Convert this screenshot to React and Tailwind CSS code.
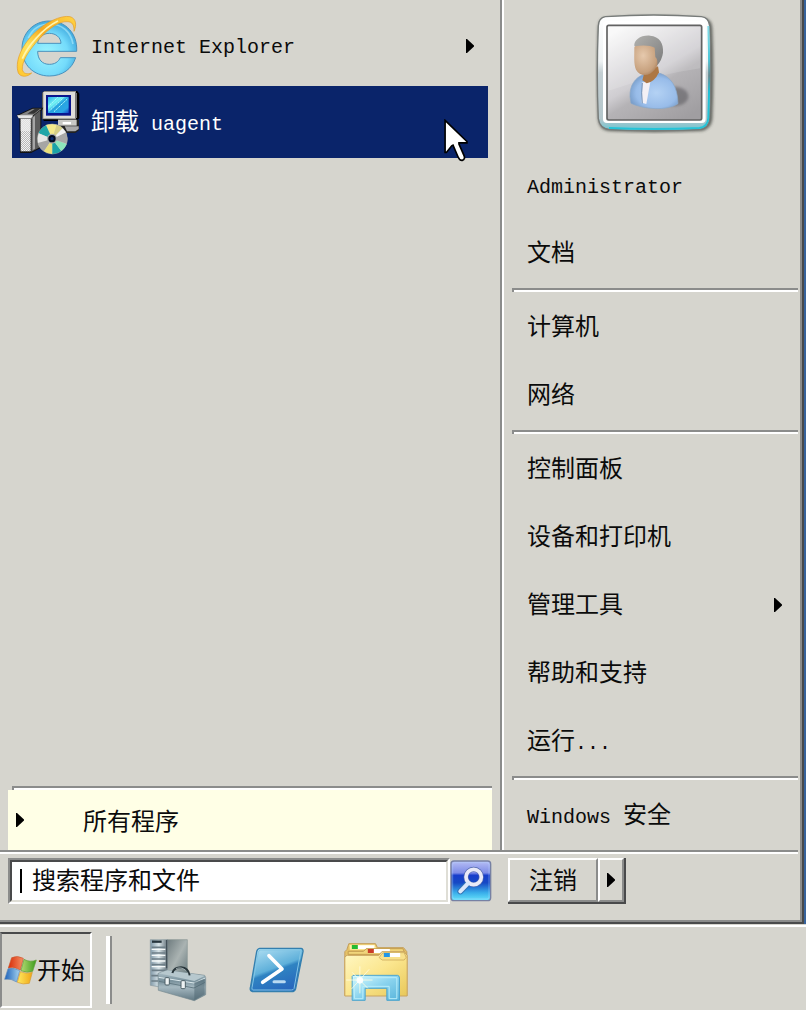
import React from "react";

const FONT = "font-['Liberation_Mono','Noto_Sans_CJK_SC',monospace]";

function Latin({ children }) {
  return <span className="whitespace-pre text-xl leading-none">{children}</span>;
}

function Arrow() {
  return (
    <svg viewBox="0 0 8 14" className="h-3.5 w-2 shrink-0" aria-hidden="true">
      <path d="M0 0H1L8 6.5V7.5L1 14H0Z" fill="#000" />
    </svg>
  );
}

function Divider() {
  return <div className="my-px ml-2 h-1 border-t-2 border-l-2 border-[#8b8c8b] bg-white" role="separator" />;
}

function IeIcon() {
  return (
    <svg viewBox="51 37 189 189" className="size-[63px]" aria-hidden="true">
      <defs>
        <radialGradient id="ieBlue" cx="0.45" cy="0.6" r="0.6">
          <stop offset="0" stopColor="#9df5ff" />
          <stop offset="0.65" stopColor="#74dbfb" />
          <stop offset="1" stopColor="#3fa9de" />
        </radialGradient>
        <linearGradient id="ieGold" x1="0" y1="1" x2="1" y2="0">
          <stop offset="0" stopColor="#ffc52c" />
          <stop offset="0.35" stopColor="#ffe45c" />
          <stop offset="0.6" stopColor="#f7a91d" />
          <stop offset="1" stopColor="#ffd545" />
        </linearGradient>
      </defs>
      <path
        fillRule="evenodd"
        d="M233 146C236 92 200 55 151 55C105 55 69 90 69 138C69 187 105 220 151 220C190 220 219 199 230 165H184C178 178 167 185 151 185C130 185 116 171 116 146ZM116 122C118 104 132 92 151 92C171 92 185 104 186 122Z"
        fill="url(#ieBlue)"
        stroke="#4a92bd"
        strokeWidth="3"
      />
      <path d="M88 106C102 74 127 64 151 64C190 64 216 88 222 124" fill="none" stroke="#b9f2ff" strokeWidth="5" opacity="0.55" />
      <path
        d="M98 211C86 223 66 225 58 211C47 179 65 134 102 95C139 58 186 37 213 42C231 47 234 66 225 86C226 66 219 57 205 57C182 55 152 75 121 109C86 146 68 179 70 201C73 213 84 216 98 211Z"
        fill="url(#ieGold)"
        stroke="#e59b22"
        strokeWidth="2"
      />
      <path d="M70 168C86 130 131 77 177 55" fill="none" stroke="#fff5ad" strokeWidth="5" />
    </svg>
  );
}

function InstallerIcon() {
  return (
    <svg viewBox="48 267 192 195" className="h-[65px] w-16" aria-hidden="true">
      <defs>
        <pattern id="dither" width="6" height="6" patternUnits="userSpaceOnUse">
          <rect width="6" height="6" fill="#f2f2f2" />
          <path d="M0 0H3V3H0ZM3 3H6V6H3Z" fill="#b8b8b8" />
        </pattern>
        <linearGradient id="crt" x1="0" y1="0" x2="1" y2="1">
          <stop offset="0" stopColor="#2aaeea" />
          <stop offset="0.35" stopColor="#76f4f4" />
          <stop offset="0.5" stopColor="#26a4e0" />
          <stop offset="0.8" stopColor="#2ba6e6" />
          <stop offset="1" stopColor="#1548c8" />
        </linearGradient>
      </defs>
      <path d="M126 276L134 270H232L238 278V352L228 360H132L126 352Z" fill="#000" />
      <path d="M127 275L133 270H228V355H127Z" fill="#8a8a86" />
      <path d="M130 273H225V352H130Z" fill="#deded8" />
      <path d="M225 276H231V351H225Z" fill="#777" />
      <path d="M138 282H213V344H138Z" fill="#0a168f" />
      <path d="M144 288H206V336H144Z" fill="url(#crt)" />
      <path d="M145 316L173 289M148 330L190 290M162 332L203 293" stroke="#b8ffff" strokeWidth="3" strokeDasharray="5 2" />
      <path d="M174 357H237V388L226 396H183Z" fill="#222" />
      <path d="M174 356H230V374H174Z" fill="#c9c9c5" />
      <path d="M188 363H213V370H188Z" fill="#fff" />
      <path d="M194 376H236V384L226 391H201Z" fill="#aaa" />
      <path d="M50 343L98 320H130L124 331V440L93 456H60L58 355Z" fill="#111" />
      <path d="M53 344L98 323H125L96 346V353H62Z" fill="#858585" />
      <path d="M82 338L104 324H120L102 338Z" fill="#333" />
      <path d="M51 343H98V352H56Z" fill="#e5e5e5" />
      <path d="M62 354H92V451H62Z" fill="url(#dither)" />
      <path d="M62 354H92V390H62Z" fill="#ececec" opacity="0.75" />
      <path d="M94 350L121 328V438L94 452Z" fill="#5c5c5c" />
      <path d="M98 350L105 344V443L98 447Z" fill="#a5a5a5" />
      <circle cx="157" cy="414" r="45" fill="#d2d2ce" stroke="#89908b" strokeWidth="2" />
      <path d="M157 414L138 372Q151 368 170 371Z" fill="#f4ea8b" />
      <path d="M157 414L170 371Q181 374 188 382Z" fill="#d6cf86" />
      <path d="M157 414L138 373Q121 382 116 397Z" fill="#20a6a8" />
      <path d="M157 414L116 397Q111 411 114 426Z" fill="#e6e6e4" />
      <path d="M157 414L114 426Q118 442 132 451Z" fill="#a6a6a4" />
      <path d="M157 414L132 451Q144 459 157 459Z" fill="#e9df7b" />
      <path d="M157 414L157 459Q172 459 184 450Z" fill="#1aa3a8" />
      <path d="M157 414L184 450Q195 442 200 429Z" fill="#8ee6bc" />
      <path d="M157 414L198 394Q204 409 201 428Z" fill="#a9a9a7" />
      <path d="M157 414L188 382L198 394Z" fill="#f2f2f2" />
      <circle cx="156" cy="413" r="15" fill="#a5aaa9" />
      <circle cx="156" cy="413" r="11" fill="#020b22" />
      <circle cx="156" cy="413" r="5" fill="#0b2d71" />
    </svg>
  );
}

function Avatar() {
  return (
    <svg viewBox="45 37 363 363" className="size-[121px]" role="img" aria-label="Administrator">
      <defs>
        <linearGradient id="photo" x1="0.2" y1="0" x2="0.8" y2="1">
          <stop offset="0" stopColor="#f8f8f8" />
          <stop offset="0.5" stopColor="#cfcdd1" />
          <stop offset="0.62" stopColor="#b5b3b6" />
          <stop offset="1" stopColor="#a09ea1" />
        </linearGradient>
        <linearGradient id="rim" x1="0" y1="0" x2="0" y2="1">
          <stop offset="0" stopColor="#fff" />
          <stop offset="0.4" stopColor="#eef2f3" />
          <stop offset="0.5" stopColor="#c3ced2" />
          <stop offset="0.9" stopColor="#b4c6cb" />
          <stop offset="1" stopColor="#6cc6d2" />
        </linearGradient>
        <linearGradient id="edge" gradientUnits="userSpaceOnUse" x1="0" y1="60" x2="0" y2="388">
          <stop offset="0" stopColor="#8ee0ea" />
          <stop offset="0.35" stopColor="#4dc6d8" />
          <stop offset="0.5" stopColor="#64888f" />
          <stop offset="0.65" stopColor="#1fc0d6" />
          <stop offset="1" stopColor="#25c4d8" />
        </linearGradient>
        <radialGradient id="face" cx="0.35" cy="0.4" r="0.8">
          <stop offset="0" stopColor="#e6c9ad" />
          <stop offset="0.65" stopColor="#c6a07d" />
          <stop offset="1" stopColor="#906039" />
        </radialGradient>
        <linearGradient id="hair" x1="0" y1="0" x2="1" y2="1">
          <stop offset="0" stopColor="#b1b1ae" />
          <stop offset="1" stopColor="#7c7c7c" />
        </linearGradient>
        <radialGradient id="shirt" cx="0.55" cy="0.55" r="0.65">
          <stop offset="0" stopColor="#b4d2f4" />
          <stop offset="0.65" stopColor="#98bce9" />
          <stop offset="1" stopColor="#6c91bd" />
        </radialGradient>
        <filter id="soft" x="-20%" y="-20%" width="140%" height="140%">
          <feGaussianBlur stdDeviation="5" />
        </filter>
      </defs>
      <path d="M72 52Q222 40 374 52Q396 57 397 85Q403 219 397 356Q393 386 364 391Q222 398 87 391Q57 388 54 355Q48 219 54 84Q55 56 72 52Z" fill="#3b3d39" opacity="0.75" filter="url(#soft)" />
      <path d="M76 48Q222 38 364 48Q386 50 389 76Q395 219 389 354Q387 382 360 386Q222 393 87 386Q59 383 55 354Q49 219 55 76Q56 51 76 48Z" fill="url(#rim)" stroke="#777b79" strokeWidth="4" />
      <path d="M385 76Q390 219 385 352Q383 379 358 382Q222 388 87 382" fill="none" stroke="url(#edge)" strokeWidth="6" />
      <rect x="69" y="61" width="308" height="306" rx="12" fill="#fff" />
      <rect x="81" y="74" width="284" height="284" rx="5" fill="url(#photo)" stroke="#626262" strokeWidth="5" />
      <path d="M86 79H360V203Q220 224 86 270Z" fill="#fff" opacity="0.14" />
      <ellipse cx="285" cy="287" rx="40" ry="29" fill="#56545a" opacity="0.55" filter="url(#soft)" />
      <path d="M150 288C149 254 165 231 190 222L240 218C271 228 293 256 294 309C262 332 190 326 153 308Z" fill="url(#shirt)" stroke="#8aa7c8" strokeWidth="2" />
      <path d="M187 245L211 244L199 310L185 306Z" fill="#f3f0f5" />
      <path d="M192 220L234 197L237 215Q224 244 200 248L187 239Z" fill="#ad7744" />
      <path d="M163 140C175 122 225 119 238 148C244 174 232 207 210 219C194 228 176 221 168 207C161 190 163 168 163 140Z" fill="url(#face)" />
      <path d="M163 137C161 118 182 103 210 105C239 108 251 127 249 156Q246 179 231 194Q235 177 226 169L224 141Q204 131 163 137Z" fill="url(#hair)" />
      <path d="M187 247Q183 275 187 308" stroke="#7592b6" strokeWidth="3" fill="none" />
    </svg>
  );
}

function Cursor() {
  return (
    <svg viewBox="72 298 72 130" className="absolute top-[33px] right-5 h-[43px] w-6" aria-hidden="true">
      <path d="M75 302V399H79L95 379L99 377L114 412Q119 424 127 423Q137 420 132 408L117 374V370H141V366Z" fill="#fff" stroke="#000" strokeWidth="5" />
    </svg>
  );
}

function FlagIcon() {
  return (
    <svg viewBox="9 554 99 90" className="h-[30px] w-[33px] shrink-0" aria-hidden="true">
      <defs>
        <linearGradient id="fr"><stop stopColor="#d92d0a" /><stop offset="1" stopColor="#f59065" /></linearGradient>
        <linearGradient id="fg"><stop stopColor="#b4da72" /><stop offset="1" stopColor="#3b9b1b" /></linearGradient>
        <linearGradient id="fb"><stop stopColor="#1d61b9" /><stop offset="1" stopColor="#a5d3ef" /></linearGradient>
        <linearGradient id="fy"><stop stopColor="#ffea60" /><stop offset="1" stopColor="#efa516" /></linearGradient>
      </defs>
      <path d="M32 562Q50 554 67 564L58 599Q42 588 22 593Z" fill="url(#fr)" stroke="#c9562f" strokeWidth="2" />
      <path d="M69 567Q87 577 106 569L95 603Q78 609 60 601Z" fill="url(#fg)" stroke="#639b3b" strokeWidth="2" />
      <path d="M21 595Q41 591 56 601L47 635Q32 624 11 627Z" fill="url(#fb)" stroke="#6289b6" strokeWidth="2" />
      <path d="M58 604Q76 612 94 606L85 639Q66 644 49 636Z" fill="url(#fy)" stroke="#d49a32" strokeWidth="2" />
    </svg>
  );
}

function ServerIcon() {
  return (
    <svg viewBox="58 52 174 192" className="h-16 w-[58px]" aria-hidden="true">
      <defs>
        <linearGradient id="srvSide" x1="0" y1="0" x2="1" y2="1"><stop stopColor="#6e7b7e" /><stop offset="0.5" stopColor="#aab3b2" /><stop offset="1" stopColor="#65777b" /></linearGradient>
        <linearGradient id="srvFront"><stop stopColor="#8199a8" /><stop offset="0.5" stopColor="#d8e4e8" /><stop offset="1" stopColor="#66747c" /></linearGradient>
        <linearGradient id="box" x1="0" y1="0" x2="0" y2="1"><stop stopColor="#b9cbd2" /><stop offset="0.35" stopColor="#78909b" /><stop offset="0.55" stopColor="#a6b9c1" /><stop offset="1" stopColor="#617883" /></linearGradient>
      </defs>
      <path d="M112 57H173V172H112Z" fill="url(#srvSide)" stroke="#8b9795" strokeWidth="2" />
      <path d="M62 57H113V183L85 198L62 194Z" fill="url(#srvFront)" stroke="#89999f" strokeWidth="2" />
      <path d="M67 63H96" stroke="#26353d" strokeWidth="7" />
      <path d="M66 80H108M66 97H108M66 115H108M66 132H108M66 149H108M65 165H88M65 181H86" stroke="#6d7e87" strokeWidth="5" />
      <path d="M66 86H107M66 104H107M66 121H107M66 138H107" stroke="#f5f9f9" strokeWidth="4" />
      <path d="M111 58V143" stroke="#435058" strokeWidth="4" />
      <path d="M85 158L112 149L225 164L228 171V222L194 240L86 209Z" fill="url(#box)" stroke="#768990" strokeWidth="2" />
      <path d="M87 158L114 149L226 165L194 181Z" fill="#b7c8ce" />
      <path d="M87 170L193 187L227 172" fill="none" stroke="#dce9ed" strokeWidth="3" />
      <path d="M88 182L193 202L226 185" fill="none" stroke="#657c86" strokeWidth="3" />
      <path d="M194 185V238L225 221V174Z" fill="#516872" opacity="0.55" />
      <path d="M128 157Q134 140 154 140Q176 142 180 164" fill="none" stroke="#29363b" strokeWidth="6" />
      <path d="M139 144Q154 137 168 149" fill="none" stroke="#c2ced1" strokeWidth="2" />
      <rect x="106" y="171" width="13" height="22" rx="3" fill="#eef3f4" stroke="#4c5e66" strokeWidth="3" />
      <rect x="154" y="180" width="13" height="24" rx="3" fill="#eef3f4" stroke="#4c5e66" strokeWidth="3" />
    </svg>
  );
}

function PowerShellIcon() {
  return (
    <svg viewBox="28 81 165 138" className="h-[46px] w-[55px]" aria-hidden="true">
      <defs>
        <linearGradient id="psBg" x1="0.2" y1="0" x2="0.65" y2="1"><stop stopColor="#aadcf1" /><stop offset="0.47" stopColor="#5fb0da" /><stop offset="0.54" stopColor="#2f83c2" /><stop offset="1" stopColor="#2766bd" /></linearGradient>
      </defs>
      <path d="M60 85H184Q191 86 190 95L168 206Q165 215 156 215H38Q30 213 32 204L51 95Q53 86 60 85Z" fill="url(#psBg)" stroke="#347fae" strokeWidth="4" />
      <path d="M61 90H184L163 206Q161 210 155 210H39Q36 209 37 203L56 96Z" fill="none" stroke="#83c6e4" strokeWidth="3" />
      <path d="M88 107L127 147L69 187" fill="none" stroke="#fff" strokeWidth="11" strokeLinecap="round" strokeLinejoin="round" />
      <path d="M103 185H134" stroke="#b9daf2" strokeWidth="9" strokeLinecap="round" />
    </svg>
  );
}

function ExplorerIcon() {
  return (
    <svg viewBox="310 69 197 180" className="h-[60px] w-[66px]" aria-hidden="true">
      <defs>
        <linearGradient id="folder" x1="0" y1="0" x2="1" y2="1"><stop stopColor="#fff8c5" /><stop offset="0.5" stopColor="#fbe68e" /><stop offset="1" stopColor="#e8c85a" /></linearGradient>
        <linearGradient id="glass" x1="0" y1="0" x2="1" y2="1"><stop stopColor="#d9fcff" /><stop offset="0.5" stopColor="#8ad3ee" /><stop offset="1" stopColor="#58b4db" /></linearGradient>
      </defs>
      <path d="M315 98L321 92L327 74H407L413 86H491L501 98V229H315Z" fill="#e6c266" stroke="#c49f5c" strokeWidth="3" />
      <path d="M329 77H405L410 92H330Z" fill="#fff0a5" />
      <path d="M351 79H403V90H351Z" fill="#fff" />
      <rect x="336" y="78" width="18" height="12" fill="#24bb31" />
      <path d="M325 97H371L379 89H489L497 106H325Z" fill="#f1d57b" stroke="#c49d50" strokeWidth="3" />
      <path d="M400 90H450V102H400Z" fill="#fff" />
      <rect x="384" y="90" width="18" height="12" fill="#ca3d28" />
      <path d="M315 116Q316 109 323 109H417L426 98H493L502 109V231H315Z" fill="url(#folder)" stroke="#c9a460" strokeWidth="3" />
      <path d="M418 116Q427 100 432 101H493L499 115L493 123H427Z" fill="#f8e18c" stroke="#c49e50" strokeWidth="2" />
      <path d="M449 102H481V114H449Z" fill="#fff" />
      <rect x="432" y="102" width="18" height="12" fill="#2196e8" />
      <path d="M337 172Q338 169 343 169H473Q479 170 479 177V244H441V208H376V244H337Z" fill="url(#glass)" stroke="#4da5cd" strokeWidth="3" />
      <path d="M343 176H471V239H448V202H369V239H344Z" fill="none" stroke="#b8edfa" strokeWidth="3" />
      <path d="M360 142V223M319 183H398M337 160L384 208M335 210L388 151" stroke="#fffde3" strokeWidth="3" opacity="0.8" />
      <circle cx="360" cy="184" r="10" fill="#fff" opacity="0.9" />
    </svg>
  );
}

function SearchIcon() {
  return (
    <svg viewBox="61 270 126 126" className="size-[42px]" aria-hidden="true">
      <defs>
        <linearGradient id="srch" x1="0" y1="0" x2="0" y2="1">
          <stop stopColor="#b7bff5" />
          <stop offset="0.3" stopColor="#7d8be7" />
          <stop offset="0.36" stopColor="#173dcb" />
          <stop offset="0.55" stopColor="#1649c4" />
          <stop offset="0.8" stopColor="#39aeea" />
          <stop offset="1" stopColor="#68e5fa" />
        </linearGradient>
      </defs>
      <rect x="64" y="273" width="119" height="119" rx="9" fill="url(#srch)" stroke="#7781a3" strokeWidth="4" />
      <rect x="69" y="278" width="109" height="109" rx="6" fill="none" stroke="#b7d6ff" strokeWidth="2" opacity="0.6" />
      <circle cx="132" cy="321" r="23" fill="none" stroke="#5268ad" strokeWidth="15" />
      <path d="M115 340L92 364" stroke="#3275b6" strokeWidth="18" strokeLinecap="round" />
      <circle cx="132" cy="321" r="23" fill="none" stroke="#e9eaf8" strokeWidth="11" />
      <path d="M115 340L92 364" stroke="#dce9fa" strokeWidth="12" strokeLinecap="round" />
    </svg>
  );
}

function SideItem({ children, submenu }) {
  return (
    <a href="#" className="flex h-[68px] items-center justify-between pr-4 pl-[23px] text-2xl leading-none">
      <span className="pt-1">{children}</span>
      {submenu && <Arrow />}
    </a>
  );
}

export default function App() {
  return (
    <main className={`bg-[#d6d5ce] text-[#0b0b0b] ${FONT}`}>
      <div className="border-r-2 border-[#37639c]">
        <section className="border-r-2 border-b-2 border-[#494a4b]">
          <div className="border-r-2 border-b-2 border-[#8b8c8b]">
            <div className="mr-0.5 flex border-b-2 border-[#8b8c8b]">
              <nav className="flex min-w-0 flex-1 flex-col border-r-2 border-[#8b8c8b] pt-2.5 pr-2 pl-2" aria-label="程序">
                <a href="#" className="mr-1 ml-1 flex h-[72px] items-center pr-3.5 pl-1 text-2xl leading-none">
                  <span className="flex w-[75px] shrink-0"><IeIcon /></span>
                  <span className="flex-1 pt-0.5"><Latin>Internet Explorer</Latin></span>
                  <Arrow />
                </a>
                <a href="#" className="relative mt-1 mr-1 ml-1 flex h-[72px] items-center bg-[#0a246a] pl-1 text-2xl leading-none text-white">
                  <span className="flex w-[75px] shrink-0"><InstallerIcon /></span>
                  <span className="pt-1">卸载<Latin> uagent</Latin></span>
                  <Cursor />
                </a>
                <div className="mt-auto ml-1 border-t-2 border-l-2 border-[#8b8c8b]">
                  <div className="h-0.5 bg-white" />
                </div>
                <button type="button" className="flex h-[60px] items-center bg-[#ffffe6] pl-2 text-2xl leading-none">
                  <Arrow />
                  <span className="ml-[59px] pt-2">所有程序</span>
                </button>
              </nav>

              <nav className="w-[296px] shrink-0 border-l-2 border-white pb-px" aria-label="系统">
                <div className="flex h-[151px] justify-center pt-[13px] pl-2">
                  <Avatar />
                </div>
                <SideItem><Latin>Administrator</Latin></SideItem>
                <SideItem>文档</SideItem>
                <Divider />
                <SideItem>计算机</SideItem>
                <SideItem>网络</SideItem>
                <Divider />
                <SideItem>控制面板</SideItem>
                <SideItem>设备和打印机</SideItem>
                <SideItem submenu>管理工具</SideItem>
                <SideItem>帮助和支持</SideItem>
                <SideItem>运行<Latin>...</Latin></SideItem>
                <Divider />
                <SideItem><Latin>Windows </Latin>安全</SideItem>
              </nav>
            </div>

            <div className="mr-0.5 flex border-t-2 border-white pt-1 pb-4">
              <form className="ml-2 flex min-w-0 flex-1 items-center" onSubmit={(e) => e.preventDefault()}>
                <div className="flex h-[46px] min-w-0 flex-1 border-2 border-t-[#8b8c8b] border-r-white border-b-white border-l-[#8b8c8b]">
                  <label className="flex min-w-0 flex-1 items-center border-2 border-t-[#494a4b] border-r-[#dfded6] border-b-[#dfded6] border-l-[#494a4b] bg-white pl-2">
                    <span className="h-6 w-0.5 shrink-0 bg-black" />
                    <input
                      type="text"
                      aria-label="搜索程序和文件"
                      placeholder="搜索程序和文件"
                      className="ml-2.5 h-full w-full min-w-0 bg-transparent pt-0.5 text-2xl leading-none outline-none placeholder:text-[#0b0b0b] placeholder:opacity-100"
                    />
                  </label>
                </div>
                <button type="submit" aria-label="搜索" className="shrink-0"><SearchIcon /></button>
              </form>
              <div className="mr-[172px] ml-4 flex h-[46px] w-[118px] shrink-0 border-r-2 border-b-2 border-[#494a4b]">
                <button type="button" className="flex-1 border-2 border-t-white border-r-[#8b8c8b] border-b-[#8b8c8b] border-l-white pt-1.5 text-2xl leading-none">
                  注销
                </button>
                <button type="button" aria-label="更多选项" className="flex w-[26px] items-center justify-center border-2 border-t-white border-r-[#8b8c8b] border-b-[#8b8c8b] border-l-white">
                  <Arrow />
                </button>
              </div>
            </div>
          </div>
        </section>
      </div>

      <footer className="border-t border-[#d6d5ce]">
        <div className="flex items-start border-t-2 border-white pt-[5px] pb-0.5">
          <button type="button" className="flex h-[76px] w-[92px] shrink-0 items-center border-2 border-t-[#494a4b] border-r-white border-b-white border-l-[#8b8c8b] pl-0.5 text-2xl leading-none">
            <FlagIcon />
            <span className="shrink-0 pt-1.5">开始</span>
          </button>
          <div className="mt-1 ml-3.5 h-[68px] w-1.5 border-r-2 border-l-4 border-r-[#8b8c8b] border-l-white" />
          <div className="flex h-[76px] items-center">
            <button type="button" aria-label="服务器管理器" className="ml-[37px]"><ServerIcon /></button>
            <button type="button" aria-label="PowerShell" className="ml-[42px]"><PowerShellIcon /></button>
            <button type="button" aria-label="资源管理器" className="mt-1 ml-[39px]"><ExplorerIcon /></button>
          </div>
        </div>
      </footer>
    </main>
  );
}
